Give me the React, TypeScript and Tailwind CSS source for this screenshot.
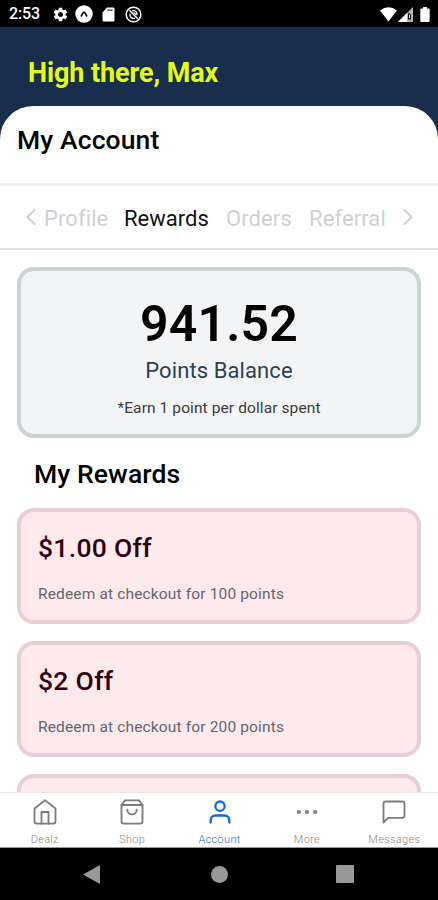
import type { ReactNode } from "react";
import clsx from "clsx";
import {
    FiChevronLeft,
    FiChevronRight,
    FiHome,
    FiMessageSquare,
    FiMoreHorizontal,
    FiShoppingBag,
    FiUser,
} from "react-icons/fi";
import { MdSettings } from "react-icons/md";

interface Reward {
    title: string;
    points: number;
}

const rewards: Reward[] = [
    { title: "$1.00 Off", points: 100 },
    { title: "$2 Off", points: 200 },
];

const tabs = [
    { label: "Profile", className: "w-[80px]" },
    { label: "Rewards", className: "w-[102px]", active: true },
    { label: "Orders", className: "w-[83px]" },
    { label: "Referral", className: "w-[77px]" },
];

const navItems = [
    { label: "Dealz", icon: FiHome },
    { label: "Shop", icon: FiShoppingBag },
    { label: "Account", icon: FiUser, active: true },
    { label: "More", icon: FiMoreHorizontal },
    { label: "Messages", icon: FiMessageSquare },
];

function StatusBar() {
    return (
        <div className="flex h-[27px] shrink-0 items-center bg-black pt-px pl-[9px] pr-[8px] text-white">
            <span className="w-[43px] text-[16px] leading-[26px] font-medium tracking-[-0.1px]">2:53</span>
            <MdSettings className="size-[17px]" />
            <svg className="ml-[6px] size-[18px]" viewBox="0 0 18 18">
                <circle cx="9" cy="9" r="8.7" fill="white" />
                <path
                    d="M6 11.5C7.3 10 7.8 7 9 7s1.7 3 3 4.500"
                    fill="none"
                    stroke="black"
                    strokeWidth="1.7"
                />
            </svg>
            <svg className="ml-[9px] h-[15px] w-[13px]" viewBox="0 0 13 15">
                <path d="M5 0.5h6.5q1 0 1 1v12q0 1-1 1h-10q-1 0-1-1v-8z" fill="white" />
                <path d="M5.5 3.200h5.500" stroke="black" strokeWidth="1.200" strokeDasharray="1.300 0.500" />
            </svg>
            <svg className="ml-[10px] size-[17px]" viewBox="0 0 17 17" fill="none" stroke="white">
                <circle cx="8.5" cy="8.5" r="7.3" strokeWidth="1.5" />
                <path d="M4.300 4.300l8.400 8.400" strokeWidth="1.500" />
                <path
                    d="M7 4.800c3-1 5.500 1.500 5 4.500M10 12.200c-3 1-5.500-1.500-5-4.500M8.500 6.500l2.500 2"
                    strokeWidth="1.300"
                />
            </svg>
            <svg className="ml-auto h-[15px] w-[17px]" viewBox="0 0 17 15">
                <path d="M0 3.5Q8.500-3 17 3.500L8.500 14.500z" fill="white" />
            </svg>
            <svg className="ml-px h-[15px] w-[15px]" viewBox="0 0 15 15">
                <path d="M15 0v15H0z" fill="#b5b5b5" />
                <path d="M9 6v9H0z" fill="white" />
                <path d="M10.800 5.500l2.200 2v5h-3v-5z" fill="#111" />
                <path d="M11.500 7.500v3.500" stroke="#ddd" strokeWidth="1" />
            </svg>
            <svg className="ml-[7px] h-[15px] w-[10px]" viewBox="0 0 10 16">
                <path d="M3 0h4v1.500h2q1 0 1 1v12.500q0 1-1 1H1q-1 0-1-1V2.500q0-1 1-1h2z" fill="white" />
            </svg>
        </div>
    );
}

function Tabs() {
    return (
        <div className="flex h-[64px] shrink-0 items-center border-b-2 border-[#dfe2e3] pt-[3px] pl-[17px] text-[22px] text-[#cdd1d4]">
            <FiChevronLeft className="mr-[-1px] mb-[4px] size-[28px] shrink-0" strokeWidth={1.7} />
            {tabs.map((tab) => (
                <span
                    key={tab.label}
                    className={clsx(
                        "shrink-0 whitespace-nowrap",
                        tab.className,
                        tab.active ? "text-[#111]" : "font-[370] tracking-[0.1px]",
                    )}
                >
                    {tab.label}
                </span>
            ))}
            <FiChevronRight className="mb-[4px] ml-[8px] size-[28px] shrink-0" strokeWidth={1.7} />
        </div>
    );
}

function BalanceCard({ children }: { children: ReactNode }) {
    return (
        <div className="mx-[17px] mt-[17px] flex h-[171px] shrink-0 flex-col items-center rounded-[17px] border-4 border-[#cbd3d5] bg-[#f2f4f6] pt-[24px]">
            <p className="text-[50px] leading-[58px] font-semibold tracking-[0.2px] text-black">{children}</p>
            <p className="mt-[5px] text-[22px] leading-[26px] font-[370] tracking-[0.1px] text-[#2c4254]">
                Points Balance
            </p>
            <p className="mt-[15px] text-[15.5px] leading-[18px] tracking-[0.1px] text-[#3c3c3c]">
                *Earn 1 point per dollar spent
            </p>
        </div>
    );
}

function RewardCard({ reward }: { reward: Reward }) {
    return (
        <div className="h-[116px] shrink-0 rounded-[17px] border-4 border-[#e9ced4] bg-[#fee9ed] pt-[20px] pl-[17px]">
            <h3 className="text-[26.5px] leading-[32px] font-medium tracking-[0.3px] text-[#33000d]">{reward.title}</h3>
            <p className="mt-[21px] text-[15.5px] leading-[18px] tracking-[0.150px] text-[#65666c]">
                Redeem at checkout for {reward.points} points
            </p>
        </div>
    );
}

function BottomNav() {
    return (
        <nav className="flex h-[56px] shrink-0 border-y border-t-[#e8e8e8] border-b-[#999] bg-white pl-px">
            {navItems.map(({ label, icon: Icon, active }) => (
                <div
                    key={label}
                    className={clsx(
                        "flex flex-1 flex-col items-center pt-[5px]",
                        active ? "text-[#1769e8]" : "text-[#7d7d7d]",
                    )}
                >
                    <Icon className="size-[28px]" strokeWidth={active ? 2 : 1.6} />
                    <span
                        className={clsx(
                            "mt-[7px] text-[11px] leading-[14px] font-light tracking-[0.3px]",
                            active ? "text-[#1769e8]" : "text-[#888]",
                        )}
                    >
                        {label}
                    </span>
                </div>
            ))}
        </nav>
    );
}

function SystemNav() {
    return (
        <div className="flex h-[52px] shrink-0 items-center bg-black pl-[83px]">
            <svg className="h-[19px] w-[17px]" viewBox="0 0 17 19">
                <path d="M17 0v19L0 9.500z" fill="#999" />
            </svg>
            <div className="ml-[111px] size-[17px] rounded-full bg-[#999]" />
            <div className="ml-[108px] size-[18px] rounded-[1px] bg-[#999]" />
        </div>
    );
}

export default function App() {
    return (
        <div className="flex h-[900px] w-[438px] flex-col overflow-hidden bg-[#192d4d] font-['Roboto',sans-serif]">
            <StatusBar />
            <header className="h-[79px] shrink-0 pt-[30px] pl-[28px]">
                <h1 className="text-[27px] leading-[32px] font-bold tracking-[-0.1px] text-[#e2fd12]">
                    High there, Max
                </h1>
            </header>
            <main className="flex min-h-0 flex-1 flex-col overflow-hidden rounded-t-[33px] bg-white">
                <div className="h-[80px] shrink-0 border-b-[3px] border-[#eeefef] pt-[18px] pl-[17px]">
                    <h2 className="text-[26.5px] leading-[32px] font-medium tracking-[0.1px] text-black">My Account</h2>
                </div>
                <Tabs />
                <BalanceCard>941.52</BalanceCard>
                <h2 className="mt-[20px] ml-[34px] shrink-0 text-[26.5px] leading-[32px] font-medium tracking-[0.1px] text-black">
                    My Rewards
                </h2>
                <div className="mx-[17px] mt-[18px] flex min-h-0 flex-1 flex-col gap-[17px] overflow-hidden">
                    {rewards.map((reward) => (
                        <RewardCard key={reward.title} reward={reward} />
                    ))}
                    {/* top edge of the next card, the rest sits under the nav */}
                    <div className="h-[116px] shrink-0 rounded-[17px] border-4 border-[#e9ced4] bg-[#fee9ed]" />
                </div>
            </main>
            <BottomNav />
            <SystemNav />
        </div>
    );
}
